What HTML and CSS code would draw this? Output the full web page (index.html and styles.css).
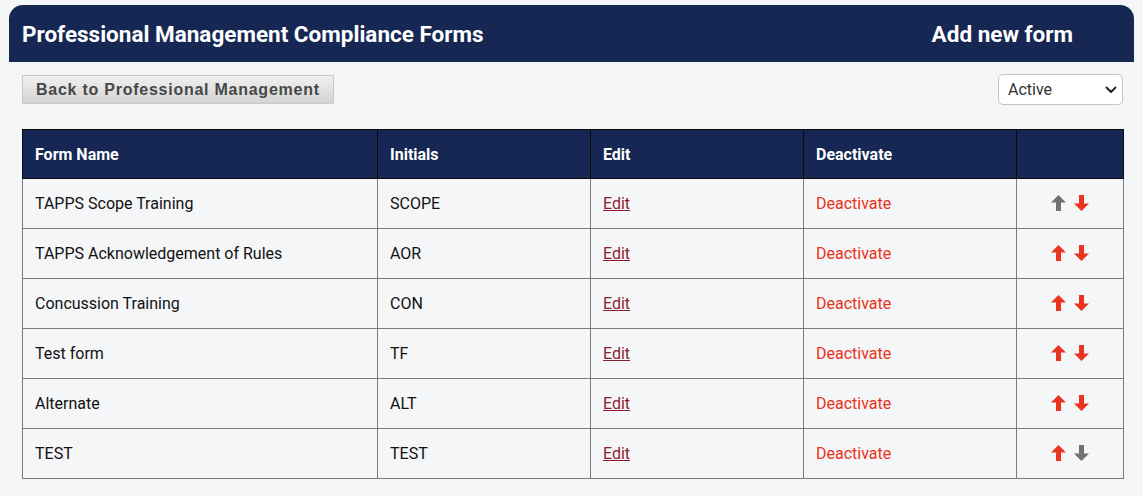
FILE: index.html
```html
<!DOCTYPE html>
<html lang="en">
<head>
<meta charset="utf-8">
<title>Professional Management Compliance Forms</title>
<link rel="stylesheet" href="styles.css">
</head>
<body>
<div class="page">
  <header class="topbar">
    <h1 class="title">Professional Management Compliance Forms</h1>
    <a class="add-link" href="#">Add new form</a>
  </header>
  <div class="content">
    <div class="toolbar">
      <button class="back-btn" type="button">Back to Professional Management</button>
      <div class="select-wrap">
        <select class="status-select">
          <option>Active</option>
          <option>Inactive</option>
        </select>
        <svg class="chevron" width="12" height="8" viewBox="0 0 12 8"><path d="M1.5 1.5 L6 6 L10.5 1.5" fill="none" stroke="#222" stroke-width="2" stroke-linecap="round" stroke-linejoin="round"/></svg>
      </div>
    </div>
    <table class="forms">
      <colgroup>
        <col class="c1"><col class="c2"><col class="c3"><col class="c4"><col class="c5">
      </colgroup>
      <thead>
        <tr><th>Form Name</th><th>Initials</th><th>Edit</th><th>Deactivate</th><th></th></tr>
      </thead>
      <tbody>
        <tr><td>TAPPS Scope Training</td><td>SCOPE</td><td><a class="edit" href="#">Edit</a></td><td><a class="deact" href="#">Deactivate</a></td>
          <td class="order"><div class="arrows"><svg class="arr gray" viewBox="0 0 15 16"><path d="M7.5 0 L15 7.5 L10 7.5 L10 16 L5 16 L5 7.5 L0 7.5 Z"/></svg><svg class="arr red" viewBox="0 0 15 16"><path d="M7.5 16 L15 8.5 L10 8.5 L10 0 L5 0 L5 8.5 L0 8.5 Z"/></svg></div></td></tr>
        <tr><td>TAPPS Acknowledgement of Rules</td><td>AOR</td><td><a class="edit" href="#">Edit</a></td><td><a class="deact" href="#">Deactivate</a></td>
          <td class="order"><div class="arrows"><svg class="arr red" viewBox="0 0 15 16"><path d="M7.5 0 L15 7.5 L10 7.5 L10 16 L5 16 L5 7.5 L0 7.5 Z"/></svg><svg class="arr red" viewBox="0 0 15 16"><path d="M7.5 16 L15 8.5 L10 8.5 L10 0 L5 0 L5 8.5 L0 8.5 Z"/></svg></div></td></tr>
        <tr><td>Concussion Training</td><td>CON</td><td><a class="edit" href="#">Edit</a></td><td><a class="deact" href="#">Deactivate</a></td>
          <td class="order"><div class="arrows"><svg class="arr red" viewBox="0 0 15 16"><path d="M7.5 0 L15 7.5 L10 7.5 L10 16 L5 16 L5 7.5 L0 7.5 Z"/></svg><svg class="arr red" viewBox="0 0 15 16"><path d="M7.5 16 L15 8.5 L10 8.5 L10 0 L5 0 L5 8.5 L0 8.5 Z"/></svg></div></td></tr>
        <tr><td>Test form</td><td>TF</td><td><a class="edit" href="#">Edit</a></td><td><a class="deact" href="#">Deactivate</a></td>
          <td class="order"><div class="arrows"><svg class="arr red" viewBox="0 0 15 16"><path d="M7.5 0 L15 7.5 L10 7.5 L10 16 L5 16 L5 7.5 L0 7.5 Z"/></svg><svg class="arr red" viewBox="0 0 15 16"><path d="M7.5 16 L15 8.5 L10 8.5 L10 0 L5 0 L5 8.5 L0 8.5 Z"/></svg></div></td></tr>
        <tr><td>Alternate</td><td>ALT</td><td><a class="edit" href="#">Edit</a></td><td><a class="deact" href="#">Deactivate</a></td>
          <td class="order"><div class="arrows"><svg class="arr red" viewBox="0 0 15 16"><path d="M7.5 0 L15 7.5 L10 7.5 L10 16 L5 16 L5 7.5 L0 7.5 Z"/></svg><svg class="arr red" viewBox="0 0 15 16"><path d="M7.5 16 L15 8.5 L10 8.5 L10 0 L5 0 L5 8.5 L0 8.5 Z"/></svg></div></td></tr>
        <tr><td>TEST</td><td>TEST</td><td><a class="edit" href="#">Edit</a></td><td><a class="deact" href="#">Deactivate</a></td>
          <td class="order"><div class="arrows"><svg class="arr red" viewBox="0 0 15 16"><path d="M7.5 0 L15 7.5 L10 7.5 L10 16 L5 16 L5 7.5 L0 7.5 Z"/></svg><svg class="arr gray" viewBox="0 0 15 16"><path d="M7.5 16 L15 8.5 L10 8.5 L10 0 L5 0 L5 8.5 L0 8.5 Z"/></svg></div></td></tr>
      </tbody>
    </table>
  </div>
</div>
</body>
</html>
```

FILE: styles.css
```css
html, body {
  margin: 0;
  padding: 0;
  background: #f5f6f8;
  font-family: Roboto, "Liberation Sans", Arial, sans-serif;
  color: #111;
}

.page {
  padding: 5px 9px 0 9px;
}

.topbar {
  display: flex;
  align-items: center;
  justify-content: space-between;
  height: 57px;
  background: #152752;
  border-radius: 14px 14px 0 0;
  padding: 0 61px 0 13px;
}

.title {
  margin: 0;
  font-size: 22.5px;
  font-weight: 700;
  color: #fff;
}

.add-link {
  color: #fff;
  font-size: 22.5px;
  font-weight: 700;
  text-decoration: none;
}

.content {
  padding: 0 11px 0 13px;
}

.toolbar {
  display: flex;
  justify-content: space-between;
  align-items: flex-start;
  height: 55px;
  padding-top: 12px;
  box-sizing: border-box;
}

.back-btn {
  margin-top: 1px;
  height: 29px;
  padding: 1px 13px 0 13px;
  border: 1px solid #c9c9c9;
  background: linear-gradient(#f0f0f0, #d4d4d4);
  font-family: "Liberation Sans", Arial, sans-serif;
  font-weight: 700;
  font-size: 16px;
  letter-spacing: 0.75px;
  color: #474747;
  cursor: pointer;
}

.select-wrap {
  position: relative;
  width: 125px;
  height: 31px;
}

.status-select {
  appearance: none;
  -webkit-appearance: none;
  width: 125px;
  height: 31px;
  border: 1px solid #c3c3c3;
  border-radius: 5px;
  background: #fff;
  font-family: Roboto, "Liberation Sans", Arial, sans-serif;
  font-size: 16px;
  color: #333;
  padding: 0 0 0 9px;
}

.chevron {
  position: absolute;
  right: 6px;
  top: 12px;
  pointer-events: none;
}

.forms {
  width: 1101px;
  border-collapse: collapse;
  table-layout: fixed;
  margin-top: 12px;
}

.c1 { width: 355px; }
.c2 { width: 213px; }
.c3 { width: 213px; }
.c4 { width: 213px; }
.c5 { width: 107px; }

.forms th {
  background: #152752;
  color: #fff;
  text-align: left;
  font-size: 16px;
  font-weight: 700;
  height: 48px;
  padding: 0 12px;
  border: 1px solid #0c0c0c;
}

.forms td {
  height: 50px;
  padding: 0 12px;
  font-size: 16px;
  color: #111;
  border: 1px solid #7a7a7a;
  box-sizing: border-box;
}

.edit {
  color: #8c1c2f;
  text-decoration: underline;
}

.deact {
  color: #e8331b;
  text-decoration: none;
}

.forms td.order {
  padding: 0;
}

.arrows {
  display: flex;
  justify-content: center;
  align-items: center;
  gap: 8px;
  margin-top: -2px;
}

.arr {
  display: block;
  width: 15px;
  height: 16px;
}

.arr.red { fill: #ea3420; }
.arr.gray { fill: #727272; }
```
